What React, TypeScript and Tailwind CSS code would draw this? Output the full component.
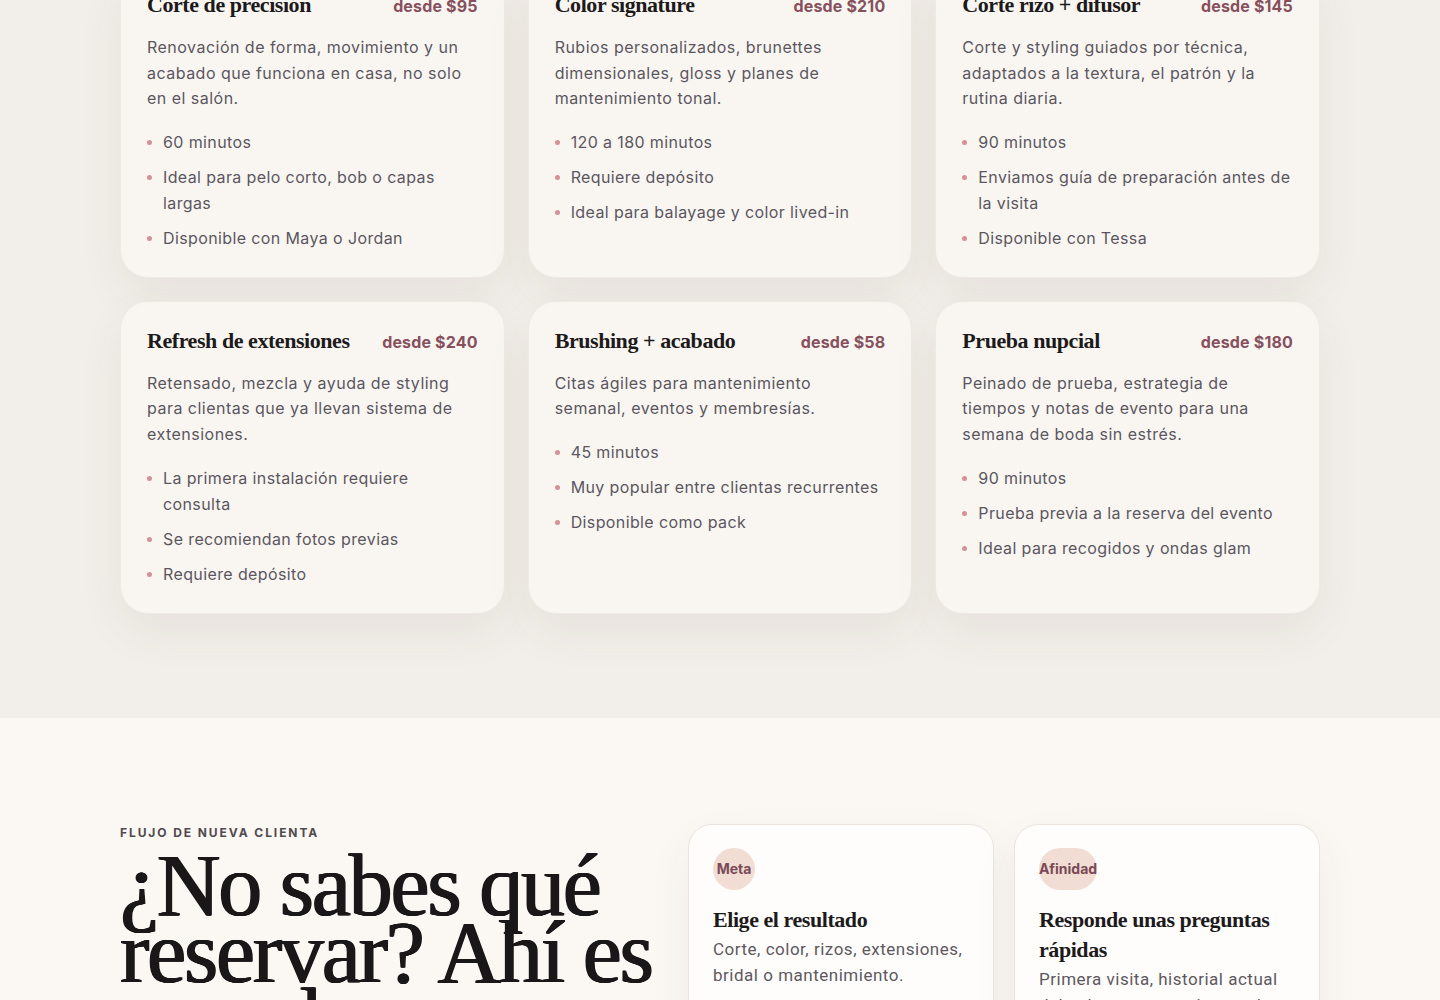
import React from 'react';

const serif = '"Liberation Serif", "DejaVu Serif", serif';
const sans = 'Inter, "Noto Sans", sans-serif';

type Service = { title: string; price: string; desc: string; items: string[] };

const services: Service[] = [
  {
    title: 'Corte de precisión',
    price: 'desde $95',
    desc: 'Renovación de forma, movimiento y un acabado que funciona en casa, no solo en el salón.',
    items: ['60 minutos', 'Ideal para pelo corto, bob o capas largas', 'Disponible con Maya o Jordan'],
  },
  {
    title: 'Color signature',
    price: 'desde $210',
    desc: 'Rubios personalizados, brunettes dimensionales, gloss y planes de mantenimiento tonal.',
    items: ['120 a 180 minutos', 'Requiere depósito', 'Ideal para balayage y color lived-in'],
  },
  {
    title: 'Corte rizo + difusor',
    price: 'desde $145',
    desc: 'Corte y styling guiados por técnica, adaptados a la textura, el patrón y la rutina diaria.',
    items: ['90 minutos', 'Enviamos guía de preparación antes de la visita', 'Disponible con Tessa'],
  },
  {
    title: 'Refresh de extensiones',
    price: 'desde $240',
    desc: 'Retensado, mezcla y ayuda de styling para clientas que ya llevan sistema de extensiones.',
    items: ['La primera instalación requiere consulta', 'Se recomiendan fotos previas', 'Requiere depósito'],
  },
  {
    title: 'Brushing + acabado',
    price: 'desde $58',
    desc: 'Citas ágiles para mantenimiento semanal, eventos y membresías.',
    items: ['45 minutos', 'Muy popular entre clientas recurrentes', 'Disponible como pack'],
  },
  {
    title: 'Prueba nupcial',
    price: 'desde $180',
    desc: 'Peinado de prueba, estrategia de tiempos y notas de evento para una semana de boda sin estrés.',
    items: ['90 minutos', 'Prueba previa a la reserva del evento', 'Ideal para recogidos y ondas glam'],
  },
];

const steps = [
  { tag: 'Meta', title: 'Elige el resultado', desc: 'Corte, color, rizos, extensiones, bridal o mantenimiento.' },
  {
    tag: 'Afinidad',
    title: 'Responde unas preguntas rápidas',
    desc: 'Primera visita, historial actual del color, textura y tiempo de styling en casa.',
  },
];

function ServiceCard({ s }: { s: Service }) {
  return (
    <div className="rounded-[28px] bg-[#f9f6f2] border border-[#efe9e3] px-[26px] pt-[25px] pb-[26px] shadow-[0_18px_45px_rgba(90,70,60,0.07)]">
      <div className="flex items-baseline justify-between gap-4">
        <h3 className="text-[22px] leading-[28px] font-bold tracking-[-0.02em] text-[#1d1a1c]" style={{ fontFamily: serif }}>
          {s.title}
        </h3>
        <span className="text-[16px] font-bold tracking-[0.01em] text-[#87505d] whitespace-nowrap">{s.price}</span>
      </div>
      <p className="mt-4 text-[16px] leading-[25.6px] tracking-[0.03em] text-[#5b5660]">{s.desc}</p>
      <ul className="mt-[17px] flex flex-col gap-[9px]">
        {s.items.map((it) => (
          <li key={it} className="flex items-start gap-[11px] text-[16px] leading-[26px] tracking-[0.024em] text-[#5b5660]">
            <span className="mt-[11px] h-[5px] w-[5px] shrink-0 rounded-full bg-[#d49199]" />
            <span>{it}</span>
          </li>
        ))}
      </ul>
    </div>
  );
}

export default function App() {
  return (
    <div className="min-h-screen bg-[#fbf7f3] overflow-hidden" style={{ fontFamily: sans }}>
      {/* Services */}
      <section className="bg-[#f2eee9] -mt-[35px] pb-[104px]">
        <div className="mx-auto w-[1200px] grid grid-cols-3 gap-[23px]">
          {services.map((s) => (
            <ServiceCard key={s.title} s={s} />
          ))}
        </div>
      </section>

      {/* New client flow */}
      <section className="bg-[#fbf7f3] pt-[106px] pb-24">
        <div className="mx-auto w-[1200px] grid grid-cols-[520px_1fr] gap-12 items-start">
          <div>
            <p className="text-[12px] font-bold tracking-[0.16em] text-[#4f4a50]">FLUJO DE NUEVA CLIENTA</p>
            <h2
              className="mt-[10px] text-[88px] leading-[67px] font-normal tracking-[-0.025em] text-[#1a1719] w-[580px] [text-shadow:0.8px_0_0_#1a1719,-0.8px_0_0_#1a1719,0_0.4px_0_#1a1719]"
              style={{ fontFamily: serif }}
            >
              ¿No sabes qué reservar? Ahí es cuando entramos.
            </h2>
          </div>
          <div className="grid grid-cols-2 gap-5">
            {steps.map((st) => (
              <div
                key={st.tag}
                className="rounded-[24px] bg-[#fffdfb] border border-[#ebe4de] px-6 pt-[23px] pb-7 shadow-[0_18px_45px_rgba(90,70,60,0.06)]"
              >
                <span className="inline-flex h-[42px] min-w-[42px] items-center justify-center rounded-full bg-[#f1ddd3] text-[14px] font-bold text-[#7b4a58]">
                  {st.tag}
                </span>
                <h3 className="mt-[15px] text-[22px] leading-[30px] font-bold tracking-[-0.02em] text-[#1d1a1c]" style={{ fontFamily: serif }}>
                  {st.title}
                </h3>
                <p
                  className="mt-[1px] text-[17px] leading-[26px] tracking-[0.03em] text-[#5d5860]"
                  style={{ fontFamily: 'Roboto, sans-serif' }}
                >
                  {st.desc}
                </p>
              </div>
            ))}
          </div>
        </div>
      </section>
    </div>
  );
}
